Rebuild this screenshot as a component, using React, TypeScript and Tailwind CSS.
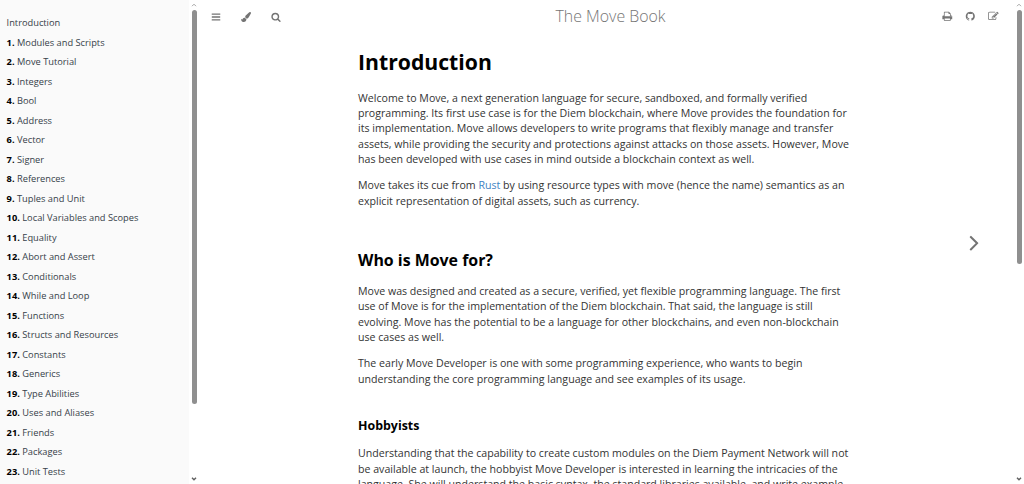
import React from 'react';

const chapters = [
    'Modules and Scripts',
    'Move Tutorial',
    'Integers',
    'Bool',
    'Address',
    'Vector',
    'Signer',
    'References',
    'Tuples and Unit',
    'Local Variables and Scopes',
    'Equality',
    'Abort and Assert',
    'Conditionals',
    'While and Loop',
    'Functions',
    'Structs and Resources',
    'Constants',
    'Generics',
    'Type Abilities',
    'Uses and Aliases',
    'Friends',
    'Packages',
    'Unit Tests',
];

const icons = {
    bars: 'M1664 1344v128q0 26-19 45t-45 19h-1408q-26 0-45-19t-19-45v-128q0-26 19-45t45-19h1408q26 0 45 19t19 45zm0-512v128q0 26-19 45t-45 19h-1408q-26 0-45-19t-19-45v-128q0-26 19-45t45-19h1408q26 0 45 19t19 45zm0-512v128q0 26-19 45t-45 19h-1408q-26 0-45-19t-19-45v-128q0-26 19-45t45-19h1408q26 0 45 19t19 45z',
    brush: 'M1615 0q70 0 122.5 46.5t52.5 116.5q0 63-45 151-332 629-465 752-97 91-218 91-126 0-216.5-92.5t-90.5-219.5q0-128 92-212l638-579q59-54 130-54zm-909 1034q39 76 106.5 130t150.5 76l1 71q4 213-129.5 347t-348.5 134q-123 0-218-46.5t-152.5-127.5-86.5-183-29-220q7 5 41 30t62 44.5 59 36.5 46 17q41 0 55-37 25-66 57.5-112.5t69.5-76 88-47.5 103-25.5 125-10.5z',
    search: 'M1216 832q0-185-131.5-316.5t-316.5-131.5-316.5 131.5-131.5 316.5 131.5 316.5 316.5 131.5 316.5-131.5 131.5-316.5zm512 832q0 52-38 90t-90 38q-54 0-90-38l-343-342q-179 124-399 124-143 0-273.5-55.5t-225-150-150-225-55.5-273.5 55.5-273.5 150-225 225-150 273.5-55.5 273.5 55.5 225 150 150 225 55.5 273.5q0 220-124 399l343 343q37 37 37 90z',
    print: 'M448 1536h896v-256h-896v256zm0-640h896v-384h-160q-40 0-68-28t-28-68v-160h-640v640zm1152 64q0-26-19-45t-45-19-45 19-19 45 19 45 45 19 45-19 19-45zm128 0v416q0 13-9.5 22.5t-22.5 9.5h-224v160q0 40-28 68t-68 28h-960q-40 0-68-28t-28-68v-160h-224q-13 0-22.5-9.5t-9.5-22.5v-416q0-79 56.5-135.5t135.5-56.5h64v-544q0-40 28-68t68-28h672q40 0 88 20t76 48l152 152q28 28 48 76t20 88v256h64q79 0 135.5 56.5t56.5 135.5z',
    github: 'M896 128q209 0 385.5 103t279.5 279.5 103 385.5q0 251-146.5 451.5t-378.5 277.5q-27 5-40-7t-13-30q0-3 .5-76.5t.5-134.5q0-97-52-142 57-6 102.5-18t94-39 81-66.5 53-105 20.5-150.5q0-119-79-206 37-91-8-204-28-9-81 11t-92 44l-38 24q-93-26-192-26t-192 26q-16-11-42.5-27t-83.5-38.5-85-13.5q-45 113-8 204-79 87-79 206 0 85 20.5 150t52.5 105 80.5 67 94 39 102.5 18q-39 36-49 103-21 10-45 15t-57 5-65.5-21.5-55.5-62.5q-19-32-48.5-52t-49.5-24l-20-3q-21 0-29 4.5t-5 11.5 9 14 13 12l7 5q22 10 43.5 38t31.5 51l10 23q13 38 44 61.5t67 30 69.5 7 55.5-3.5l23-4q0 38 .5 88.5t.5 54.5q0 18-13 30t-40 7q-232-77-378.5-277.5t-146.5-451.5q0-209 103-385.5t279.5-279.5 385.5-103z',
    edit: 'M888 1184l116-116-152-152-116 116v56h96v96h56zm440-720q-16-16-33 1l-350 350q-17 17-1 33t33-1l350-350q17-17 1-33zm80 594v190q0 119-84.5 203.5t-203.5 84.5h-832q-119 0-203.5-84.5t-84.5-203.5v-832q0-119 84.5-203.5t203.5-84.5h832q63 0 117 25 15 7 18 23 3 17-9 29l-49 49q-14 14-32 8-23-6-45-6h-832q-66 0-113 47t-47 113v832q0 66 47 113t113 47h832q66 0 113-47t47-113v-126q0-13 9-22l64-64q15-15 35-7t20 29zm-96-738l288 288-672 672h-288v-288zm444 132l-92 92-288-288 92-92q28-28 68-28t68 28l152 152q28 28 28 68t-28 68z',
    next: 'M1171 960q0 13-10 23l-466 466q-10 10-23 10t-23-10l-50-50q-10-10-10-23t10-23l393-393-393-393q-10-10-10-23t10-23l50-50q10-10 23-10t23 10l466 466q10 10 10 23z',
};

const Icon: React.FC<{ name: keyof typeof icons; className: string }> = ({ name, className }) => (
    <svg viewBox="0 0 1792 1792" fill="currentColor" className={`shrink-0 overflow-visible ${className}`}>
        <path d={icons[name]} />
    </svg>
);

const Scrollbar: React.FC<{ thumb: string }> = ({ thumb }) => (
    <div className="flex h-full w-2.5 shrink-0 flex-col items-center pt-[3px] pb-[3px]">
        <svg viewBox="0 0 6 4" className="h-1 w-1.5 fill-none stroke-[#a5a5a5]">
            <path d="M1 3.2 3 1.2 5 3.2" />
        </svg>
        <div className={`mt-[3px] w-[5px] rounded-full bg-[#8f8f8f] ${thumb}`} />
        <svg viewBox="0 0 6 4" className="mt-auto h-1 w-1.5 fill-none stroke-[#606060] stroke-[1.4]">
            <path d="M1 .8 3 2.8 5 .8" />
        </svg>
    </div>
);

const Lines: React.FC<{ lines: React.ReactNode[]; className?: string }> = ({ lines, className = '' }) => (
    <p className={`text-[10.61px] leading-[15.4px] whitespace-nowrap ${className}`}>
        {lines.map((line, i) => (
            <span key={i} className="block">{line}</span>
        ))}
    </p>
);

const Sidebar: React.FC = () => (
    <nav className="h-full w-[189px] shrink-0 overflow-hidden bg-[#fafafa] pt-[13.4px] pl-[6.6px] text-[9.28px] leading-[19.48px] whitespace-nowrap text-[#364149]">
        <div>Introduction</div>
        {chapters.map((title, i) => (
            <div key={title}>
                <strong className="font-bold text-black">{i + 1}.</strong> {title}
            </div>
        ))}
    </nav>
);

const App: React.FC = () => {
    return (
        <div className="flex h-[484px] w-[1024px] overflow-hidden bg-white font-['Open_Sans',sans-serif] text-[#333333]">
            <Sidebar />
            <Scrollbar thumb="h-[394px]" />
            <main className="flex min-w-0 flex-1 flex-col">
                <header className="flex h-[33px] shrink-0 items-center justify-between pr-[15px] pl-3 text-[#747474]">
                    <div className="flex w-[121px] items-center">
                        <Icon name="bars" className="h-[10px] w-[10px]" />
                        <Icon name="brush" className="ml-5 h-[10px] w-[10px]" />
                        <Icon name="search" className="ml-5 h-[10px] w-[10px]" />
                    </div>
                    <h1 className="pt-px text-[15.9px] font-light">The Move Book</h1>
                    <div className="flex w-[110px] items-center justify-end">
                        <Icon name="print" className="h-[10.6px] w-[10.6px]" />
                        <Icon name="github" className="ml-[12.4px] h-[10.6px] w-[10.6px]" />
                        <Icon name="edit" className="ml-[12.6px] h-[10.6px] w-[10.6px]" />
                    </div>
                </header>
                <div className="flex min-h-0 flex-1 justify-between pl-[159px]">
                    <article className="w-[498px]">
                        <h1 className="mt-[14px] text-[21.2px] leading-[30px] font-bold text-black">Introduction</h1>
                        <Lines
                            className="mt-[13.6px]"
                            lines={[
                                'Welcome to Move, a next generation language for secure, sandboxed, and formally verified',
                                'programming. Its first use case is for the Diem blockchain, where Move provides the foundation for',
                                'its implementation. Move allows developers to write programs that flexibly manage and transfer',
                                'assets, while providing the security and protections against attacks on those assets. However, Move',
                                'has been developed with use cases in mind outside a blockchain context as well.',
                            ]}
                        />
                        <Lines
                            className="mt-[10.6px]"
                            lines={[
                                <>Move takes its cue from <a className="text-[#4183c4]">Rust</a> by using resource types with move (hence the name) semantics as an</>,
                                'explicit representation of digital assets, such as currency.',
                            ]}
                        />
                        <h2 className="mt-[40px] text-[15.92px] leading-[23px] font-bold text-black">Who is Move for?</h2>
                        <Lines
                            className="mt-[12px]"
                            lines={[
                                'Move was designed and created as a secure, verified, yet flexible programming language. The first',
                                'use of Move is for the implementation of the Diem blockchain. That said, the language is still',
                                'evolving. Move has the potential to be a language for other blockchains, and even non-blockchain',
                                'use cases as well.',
                            ]}
                        />
                        <Lines
                            className="mt-[10.6px]"
                            lines={[
                                'The early Move Developer is one with some programming experience, who wants to begin',
                                'understanding the core programming language and see examples of its usage.',
                            ]}
                        />
                        <h3 className="mt-[30.4px] text-[12.4px] leading-[18px] font-bold text-black">Hobbyists</h3>
                        <Lines
                            className="mt-[11px]"
                            lines={[
                                'Understanding that the capability to create custom modules on the Diem Payment Network will not',
                                'be available at launch, the hobbyist Move Developer is interested in learning the intricacies of the',
                                'language. She will understand the basic syntax, the standard libraries available, and write example',
                            ]}
                        />
                    </article>
                    <a className="mt-[196px] mr-[26.5px] text-[#747474]">
                        <Icon name="next" className="block h-[26.5px] w-[26.5px]" />
                    </a>
                </div>
            </main>
            <Scrollbar thumb="h-[254px]" />
        </div>
    );
};

export default App;
